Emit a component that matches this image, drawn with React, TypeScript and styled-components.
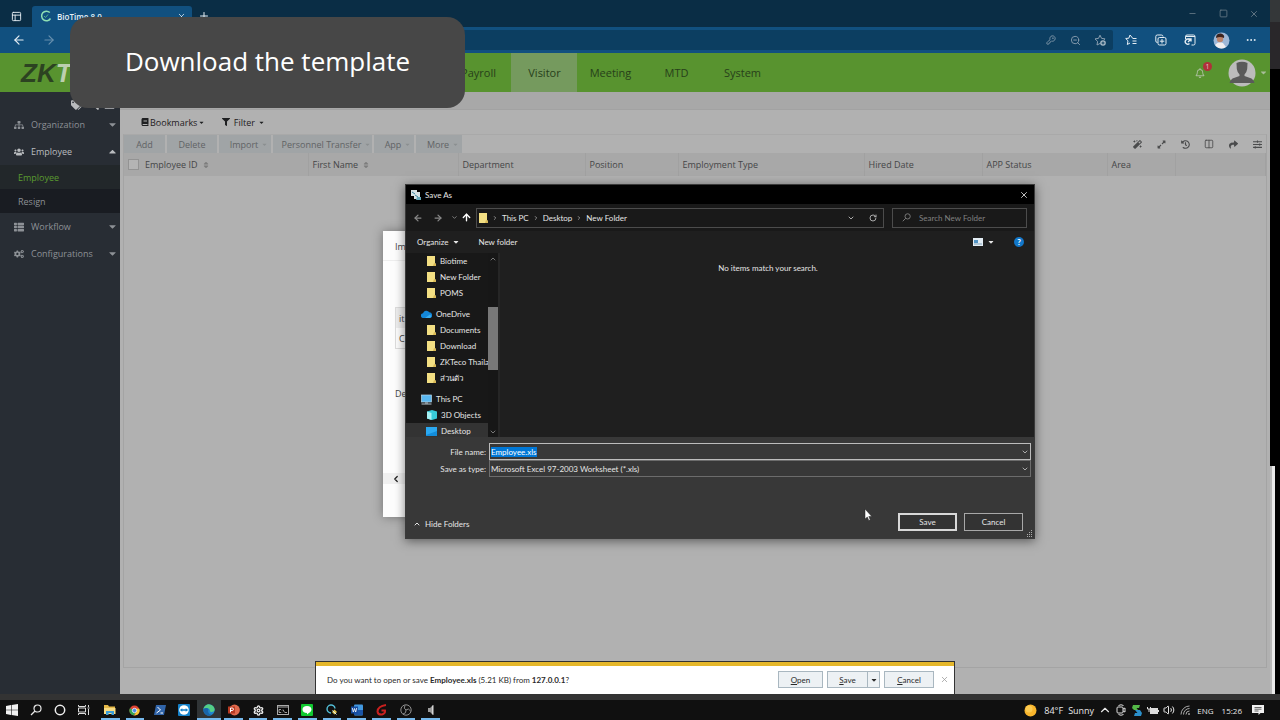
import React, { useEffect, useRef } from "react";
import styled, { createGlobalStyle, css } from "styled-components";
import {
  FaSitemap, FaUsers, FaThList, FaCogs, FaTags, FaBook, FaFilter, FaMagic, FaExpandAlt,
  FaHistory, FaShare, FaSlidersH, FaSort, FaRegBell, FaCaretDown, FaCaretUp, FaSearch, FaBars,
} from "react-icons/fa";
import {
  ArrowLeft, ArrowRight, ArrowUp, ChevronDown, ChevronUp, ChevronRight, ChevronLeft, KeyRound, ZoomOut,
  Settings, X, Plus, Minus, Square, RotateCw, Volume2, PanelsTopLeft, Ellipsis, Columns2,
} from "lucide-react";

const Global = createGlobalStyle`
  * { box-sizing: border-box; }
  body { margin: 0; background: #000; font-family: "Open Sans", "Noto Sans", sans-serif; }
  button, input, select { font: inherit; color: inherit; margin: 0; padding: 0; border: 0; background: none; border-radius: 0; }
  a { color: inherit; text-decoration: none; }
  ul { list-style: none; margin: 0; padding: 0; }
  svg { display: block; flex: none; }
`;

const Screen = styled.div`
  position: relative;
  min-height: 100vh;
  display: flex;
  flex-direction: column;
  background: #333333;
  overflow: hidden;
`;
const Desktop = styled.div`
  flex: 1;
  display: grid;
  grid-template-columns: minmax(0, 1fr) 10px;
  padding-bottom: 6px;
`;
const Browser = styled.main`
  display: flex;
  flex-direction: column;
  background: #b1b1b1;
`;
const Edge = styled.div`
  display: flex;
  flex-direction: column;
  background: #000;
`;
const EdgeTop = styled.div`
  height: 69px;
  background: linear-gradient(#343739 0 22px, #29272a 22px 100%);
`;
const EdgeLight = styled.div`
  margin-top: auto;
  height: 228px;
  width: 5px;
  background: linear-gradient(90deg, #b8b8b8 0 2px, #e9e9e9 2px 100%);
`;

/* Browser chrome */
const TabStrip = styled.div`
  height: 27px;
  display: flex;
  align-items: flex-end;
  background: #0a2d45;
  color: #e8f0f5;
`;
const StripButton = styled.button`
  width: ${(p: { $w?: number }) => p.$w || 32}px;
  height: 22px;
  display: grid;
  place-items: center;
`;
const BrowserTab = styled.div`
  width: 160px;
  height: 21px;
  padding: 0 6px 1px 8px;
  display: flex;
  align-items: center;
  gap: 5px;
  border-radius: 3px 3px 0 0;
  background: #11507f;
  font-size: 8px;
  font-weight: 600;
  button { margin-left: auto; }
`;
const WindowControls = styled.div`
  margin-left: auto;
  display: flex;
  height: 27px;
  align-items: center;
  color: #70818d;
`;
const AddressBar = styled.div`
  height: 26px;
  padding: 0 3px 0 4px;
  display: flex;
  align-items: center;
  background: #11507f;
  color: #e6eef4;
`;
const AddressField = styled.div`
  flex: 1;
  height: 20px;
  margin-left: 36px;
  display: flex;
  align-items: center;
  justify-content: flex-end;
  border-radius: 2px;
  background: #0c3e61;
  color: #8b9fb0;
`;
const BarButton = styled.button`
  width: ${(p: { $w?: number }) => p.$w || 30}px;
  height: 20px;
  display: grid;
  place-items: center;
  opacity: ${(p: { $w?: number; $dim?: boolean }) => (p.$dim ? 0.4 : 1)};
`;

/* Application header */
const AppHeader = styled.header`
  height: 39px;
  display: flex;
  align-items: center;
  background: #58932f;
  color: #27401a;
`;
const Logo = styled.div`
  width: 445px;
  padding: 2px 0 0 21px;
  font: italic bold 26px "Liberation Sans", Arial, sans-serif;
  color: #2c4321;
  span { color: #bccfae; }
`;
const MainNav = styled.nav`
  display: flex;
  height: 100%;
`;
const NavItem = styled.a<{ $active?: boolean }>`
  width: 66px;
  display: grid;
  place-items: center;
  padding-left: 1px;
  font-size: 11px;
  background: ${(p) => (p.$active ? "#759a5e" : "transparent")};
`;
const HeaderTools = styled.div`
  margin-left: auto;
  display: flex;
  align-items: center;
  color: #a8bd99;
`;
const Bell = styled.button`
  position: relative;
  width: 24px;
  height: 24px;
  margin-right: 16px;
  display: grid;
  place-items: center;
`;
const Badge = styled.span`
  position: absolute;
  top: 1px;
  right: 0;
  width: 9px;
  height: 9px;
  border-radius: 50%;
  background: #b0303a;
  color: #e5c3c5;
  font-size: 7px;
  line-height: 9px;
  text-align: center;
`;
const UserButton = styled.button`
  display: flex;
  align-items: center;
  gap: 3px;
  padding-right: 2px;
`;

/* Application body */
const AppBody = styled.div`
  flex: 1;
  display: grid;
  grid-template-columns: 120px minmax(0, 1fr);
`;
const Sidebar = styled.aside`
  background: #282d34;
  color: #8d9196;
  font-size: 9px;
`;
const SideTools = styled.div`
  height: 19px;
  padding: 7px 5px 0 71px;
  display: flex;
  justify-content: space-between;
  color: #b9bbbd;
`;
const SideItem = styled.a<{ $open?: boolean }>`
  height: 27px;
  padding: 0 2px 0 14px;
  display: flex;
  align-items: center;
  gap: 7px;
  color: ${(p) => (p.$open ? "#b9bcbf" : "inherit")};
  svg:last-child { margin-left: auto; }
`;
const SubItem = styled.a<{ $active?: boolean }>`
  height: 24px;
  padding-left: 18px;
  display: flex;
  align-items: center;
  color: ${(p) => (p.$active ? "#5b9c30" : "#8d9196")};
  background: ${(p) => (p.$active ? "#22272a" : "#191c22")};
`;
const Content = styled.section`
  display: flex;
  flex-direction: column;
  color: #3d3f41;
  font-size: 9px;
`;
const PageTabs = styled.div`
  height: 18px;
  background: #a8a8a8;
  border-bottom: 1px solid #a2a2a2;
`;
const QuickBar = styled.div`
  height: 24px;
  padding-left: 21px;
  display: flex;
  align-items: center;
  gap: 17px;
  color: #1f2022;
  button { display: flex; align-items: center; gap: 1px; }
`;
const Panel = styled.div`
  flex: 1;
  margin: 0 3px 26px;
  border: 1px solid #a4a4a4;
  border-top-color: #a9a9a9;
`;
const ActionBar = styled.div`
  height: 18px;
  display: flex;
  align-items: stretch;
  gap: 2px;
`;
const Action = styled.button<{ $w: number }>`
  width: ${(p) => p.$w}px;
  display: flex;
  align-items: center;
  justify-content: center;
  gap: 3px;
  background: #a0a4a6;
  color: #606365;
  svg { color: #8b8f91; margin-right: -8px; }
`;
const ToolIcons = styled.div`
  margin-left: auto;
  display: flex;
  color: #4a4b4c;
  button { width: 24px; padding-right: 4px; display: grid; place-items: center end; }
`;
const DataTable = styled.table`
  width: 100%;
  table-layout: fixed;
  border-collapse: collapse;
  th {
    height: 23px;
    padding: 0 0 0 4px;
    text-align: left;
    font-weight: 400;
    white-space: nowrap;
    color: #454647;
    background: #a8a8a8;
    border-right: 1px solid #a1a1a1;
  }
  th:first-child { border-right: 0; }
  input {
    appearance: none;
    display: block;
    width: 11px;
    height: 11px;
    border: 1px solid #939393;
    background: #b4b4b4;
  }
`;
const HeadCell = styled.span`
  display: flex;
  align-items: center;
  gap: 4px;
  svg { color: #7d7d7d; }
`;

/* Import form that lies behind the file dialog */
const ImportModal = styled.div`
  position: absolute;
  left: 383px;
  top: 231px;
  width: 640px;
  height: 286px;
  background: #fdfdfd;
  box-shadow: 0 0 10px rgba(0, 0, 0, 0.35);
  color: #444;
  font-size: 9px;
  display: flex;
  flex-direction: column;
`;
const ModalTitle = styled.div`
  height: 30px;
  padding: 9px 12px;
  border-bottom: 1px solid #eee;
`;
const ModalTable = styled.div`
  margin: 46px 12px 0;
  border: 1px solid #ddd;
  div { height: 20px; padding: 4px 3px; }
  div:first-child { background: #eee; }
`;
const ModalNote = styled.div`
  padding: 38px 12px 0;
`;
const ModalScroll = styled.div`
  margin: auto 0 33px;
  height: 11px;
  padding-left: 8px;
  display: flex;
  align-items: center;
  background: #f0f0f0;
  color: #222;
`;

/* File dialog */
const Dialog = styled.section`
  position: absolute;
  left: 405px;
  top: 184px;
  width: 630px;
  height: 355px;
  display: flex;
  flex-direction: column;
  border: 1px solid #3a3a3a;
  background: #1f1f1f;
  color: #e6e6e6;
  font-family: Lato, "Noto Sans", sans-serif;
  font-size: 8px;
  box-shadow: 0 2px 10px rgba(0, 0, 0, 0.5);
`;
const DialogTitle = styled.div`
  height: 19px;
  padding: 0 5px 0 4px;
  display: flex;
  align-items: center;
  gap: 4px;
  background: #000;
  button { margin-left: auto; }
`;
const PathRow = styled.div`
  height: 27px;
  padding: 0 7px 0 5px;
  display: flex;
  align-items: center;
  background: #191919;
`;
const HistoryButton = styled.button<{ $w: number; $bright?: boolean }>`
  width: ${(p) => p.$w}px;
  display: grid;
  place-items: center;
  color: ${(p) => (p.$bright ? "#fff" : "#888")};
`;
const PathField = styled.div`
  flex: 1;
  height: 20px;
  margin-right: 8px;
  padding: 0 6px 0 1px;
  display: flex;
  align-items: center;
  gap: 4px;
  border: 1px solid #4c4c4c;
  svg { color: #aaa; }
`;
const PathEnd = styled.div`
  margin-left: auto;
  display: flex;
  gap: 14px;
`;
const SearchField = styled.label`
  width: 135px;
  height: 20px;
  padding-left: 9px;
  display: flex;
  align-items: center;
  gap: 8px;
  border: 1px solid #4c4c4c;
  color: #808080;
  input { width: 100px; outline: 0; }
  input::placeholder { color: #808080; opacity: 1; }
`;
const CommandRow = styled.div`
  height: 22px;
  padding: 0 10px 0 11px;
  display: flex;
  align-items: center;
  gap: 18px;
  button { display: flex; align-items: center; gap: 4px; }
`;
const CommandEnd = styled.div`
  margin-left: auto;
  display: flex;
  gap: 19px;
`;
const Help = styled.button`
  width: 10px;
  height: 10px;
  border-radius: 50%;
  background: #1277c9;
  color: #fff;
  font-weight: 700;
  justify-content: center;
`;
const Browse = styled.div`
  height: 184px;
  display: grid;
  grid-template-columns: 82px 10px minmax(0, 1fr);
`;
const Tree = styled.ul`
  overflow: hidden;
  height: 184px;
  background: #181818;
`;
const TreeRow = styled.li<{ $root?: boolean; $selected?: boolean }>`
  height: 16px;
  margin-top: ${(p) => (p.$root ? 5 : 0)}px;
  padding-left: ${(p) => (p.$root ? 15 : 20)}px;
  display: flex;
  align-items: center;
  gap: 4px;
  white-space: nowrap;
  background: ${(p) => (p.$selected ? "#333" : "transparent")};
`;
const TreeScroll = styled.div`
  display: flex;
  flex-direction: column;
  justify-content: space-between;
  align-items: center;
  padding: 2px 0 1px;
  background: #171717;
  color: #aaa;
`;
const TreeThumb = styled.div`
  width: 10px;
  height: 63px;
  margin-top: -14px;
  background: #787878;
`;
const Empty = styled.div`
  padding: 10px 0 0 2px;
  text-align: center;
  border-left: 2px solid #262626;
`;
const DialogFoot = styled.form`
  flex: 1;
  padding: 6px 3px 0 0;
  display: flex;
  flex-direction: column;
  background: #383838;
`;
const FormRow = styled.div<{ $strong?: boolean }>`
  display: grid;
  grid-template-columns: 80px minmax(0, 1fr);
  gap: 3px;
  align-items: center;
  label { text-align: right; }
  > div {
    height: 17px;
    padding: 0 1px;
    display: flex;
    align-items: center;
    border: 1px solid ${(p) => (p.$strong ? "#bcbcbc" : "#6c6c6c")};
  }
  input, select { flex: 1; min-width: 0; appearance: none; outline: 0; }
  input::selection { background: #0078d7; color: #fff; }
`;
const FootRow = styled.div`
  margin-top: 36px;
  padding: 0 8px 0 7px;
  display: flex;
  gap: 7px;
`;
const HideFolders = styled.button`
  margin-right: auto;
  padding-top: 4px;
  display: flex;
  align-items: center;
  gap: 4px;
`;
const DialogButton = styled.button<{ $default?: boolean }>`
  width: 59px;
  height: 18px;
  background: #333;
  border: ${(p) => (p.$default ? "2px solid #d8d8d8" : "1px solid #a8a8a8")};
`;
const Grip = styled.svg`
  position: absolute;
  right: 1px;
  bottom: 1px;
`;
const Pointer = styled.svg`
  position: absolute;
  left: 864px;
  top: 508px;
`;

/* Download prompt */
const Prompt = styled.section`
  position: absolute;
  left: 315px;
  right: 325px;
  bottom: 26px;
  height: 33px;
  padding: 3px 4px 0 11px;
  display: flex;
  align-items: center;
  border: 1px solid #333;
  border-bottom: 0;
  background: linear-gradient(#e5b72b 0 4px, #fff 4px 100%);
  color: #2a2a2a;
  font-family: Lato, "Noto Sans", sans-serif;
  font-size: 8px;
  p { margin: 0 auto 0 0; }
`;
const PromptButton = styled.button<{ $w: number }>`
  width: ${(p) => p.$w}px;
  height: 17px;
  display: flex;
  align-items: center;
  justify-content: center;
  border: 1px solid #a9b7c0;
  background: #edf1f4;
  u { text-underline-offset: 1px; }
`;
const PromptActions = styled.div`
  display: flex;
  button + button { margin-left: 4px; }
  button:nth-child(3) { margin-left: -1px; }
`;
const PromptClose = styled.button`
  width: 10px;
  margin-left: 6px;
  color: #999;
`;

/* Taskbar */
const Taskbar = styled.footer`
  height: 20px;
  display: flex;
  background: #101010;
  color: #e8e8e8;
`;
const SystemButtons = styled.div`
  width: 98px;
  padding-right: 2px;
  display: grid;
  grid-template-columns: repeat(4, 1fr);
  button { display: grid; place-items: center; }
`;
const Apps = styled.div`
  width: 345px;
  display: grid;
  grid-template-columns: repeat(14, 1fr);
`;
const running = css`
  box-shadow: inset 0 -2px #76b9ed;
`;
const AppButton = styled.button<{ $running?: boolean; $active?: boolean }>`
  margin: 0 3px;
  display: grid;
  place-items: center;
  ${(p) => p.$running && running}
  ${(p) => p.$active && css`margin: 0; background: #303436;`}
`;
const Tray = styled.div`
  margin-left: auto;
  padding-right: 16px;
  display: flex;
  align-items: center;
  font-size: 8px;
`;
const Weather = styled.div`
  font-size: 9px;
  margin: 0 3px 0 7px;
  span { margin-left: 5px; }
`;
const TrayIcon = styled.span`
  width: 16px;
  display: grid;
  place-items: center;
`;
const Clock = styled.span`
  margin: 0 10px 0 8px;
`;

const Caption = styled.div`
  position: absolute;
  left: 70px;
  top: 17px;
  width: 395px;
  height: 91px;
  padding-bottom: 3px;
  display: grid;
  place-items: center;
  border-radius: 18px;
  background: #474747;
  color: #fff;
  h1 { margin: 0; font-size: 26px; font-weight: 400; white-space: nowrap; }
`;

const Folder = () => (
  <svg width="10" height="12" viewBox="0 0 10 12">
    <path d="M1 1h8v7l1 1v2H1z" fill="#f3df83" />
    <path d="M8 8l2 1v2H7z" fill="#d9b956" />
  </svg>
);
const Cloud = () => (
  <svg width="11" height="8" viewBox="0 0 11 8">
    <path d="M2.500 8A2.400 2.400 0 0 1 2 3.200 3.500 3.500 0 0 1 8.300 2.300 2.900 2.900 0 0 1 9 8z" fill="#1487d8" />
    <path d="M4 8l5-3.500a2 2 0 0 1 0 3.500z" fill="#39aef0" />
  </svg>
);
const Computer = () => (
  <svg width="11" height="11" viewBox="0 0 11 11">
    <rect x="0.500" y="1" width="10" height="7" fill="#59b7f0" stroke="#b8d8ea" strokeWidth="0.700" />
    <path d="M0.500 10h10M4 9h3" stroke="#b9c7d0" />
  </svg>
);
const Cube = () => (
  <svg width="11" height="12" viewBox="0 0 11 12">
    <path d="M1 2.500l5-1.500 5 1.500v7L6 11 1 9.500z" fill="#38cbd8" />
    <path d="M1 2.500l4.500 1.500v7L1 9.500z" fill="#a5f1f4" />
  </svg>
);
const Screenlet = () => (
  <svg width="11" height="9" viewBox="0 0 11 9">
    <rect width="11" height="9" fill="#138ddb" />
    <path d="M0 0h11v4L0 8z" fill="#2ba9f2" />
  </svg>
);
const Avatar = () => (
  <svg width="28" height="28" viewBox="0 0 28 28">
    <circle cx="14" cy="14" r="13.500" fill="#bcbcbc" />
    <path d="M8.500 4q5.500-2.500 11 0l-.3 6q-.7 4-2.700 5.500V17l7 2.500q2.500 1.500 3 4.500H1.500q.5-3 3-4.500l7-2.500v-1.500Q9.500 14 8.800 10z" fill="#5a5a5a" />
  </svg>
);
const Profile = () => (
  <svg width="17" height="17" viewBox="0 0 17 17">
    <circle cx="8.500" cy="8.500" r="8" fill="#9eb8d8" />
    <path d="M2 13q3-4 8-2l3 4q-6 4-11-2z" fill="#f1eef0" />
    <circle cx="7" cy="7" r="3.200" fill="#bb846c" />
    <path d="M3 6q0-5 5-4.500 4 1 3 4.500-4-2-8 0z" fill="#3b2420" />
  </svg>
);
const Spinner = () => (
  <svg width="12" height="12" viewBox="0 0 12 12" fill="none">
    <path d="M9.800 2.500A4.800 4.800 0 1 0 10.500 8.500" stroke="#8fe0b4" strokeWidth="1.500" />
    <path d="M4 6l1.500 1.500L8 4.500" stroke="#51b68a" />
  </svg>
);
const StarPlus = () => (
  <svg width="12" height="12" viewBox="0 0 12 12" fill="none">
    <path d="M6.500 9.200L3 11l.6-3.600L1 4.900l3.500-.5L6 1.200l1.600 3.200 3.400.5-1 1" stroke="currentColor" />
    <circle cx="9" cy="9" r="2.800" fill="#a9bac6" />
    <path d="M9 7.500v3M7.500 9h3" stroke="#0c3e61" />
  </svg>
);
const FavList = () => (
  <svg width="12" height="12" viewBox="0 0 12 12" fill="none" stroke="currentColor" strokeWidth="1">
    <path d="M7.500 4L5 1 3.800 4.200.7 4.500 3 6.800 2.300 10.500 5 9M7.500 4.500h4M7.500 7h4M7.500 9.500h4" />
  </svg>
);
const Collections = () => (
  <svg width="12" height="12" viewBox="0 0 12 12" fill="none" stroke="currentColor">
    <path d="M2.500 8.500Q.8 8.500.8 7V2.500Q.8 1 2.300 1h4Q8 1 8 2.500" />
    <rect x="3" y="3.500" width="8" height="7.500" rx="1.500" />
    <path d="M7 5v4.500M4.800 7.200h4.500" />
  </svg>
);
const Essentials = () => (
  <svg width="12" height="12" viewBox="0 0 12 12" fill="none" stroke="currentColor">
    <path d="M1.500 5V2.500Q1.500 1 3 1h6.500Q11 1 11 2.500v7q0 1.500-1.500 1.500H7.500M1.500 2.500h9.500" />
    <path d="M5 5.500A2.500 2.500 0 1 0 5.500 9.500M4 8l3-3M4.500 5H7v2.500" strokeWidth="1.400" />
  </svg>
);
const WinLogo = () => (
  <svg width="12" height="12" viewBox="0 0 12 12" fill="#f2f2f2">
    <path d="M0 2l5-1v4.700H0zM5.600.9L12 0v5.700H5.600zM0 6.300h5V11l-5-1zM5.600 6.300H12V12l-6.400-.9z" />
  </svg>
);
const TaskView = () => (
  <svg width="12" height="12" viewBox="0 0 12 12" fill="none" stroke="#ddd">
    <path d="M.5 1v1.500h7V1M.5 11V9.500h7V11M.5 4h7v4h-7zM10.500 1v2M10.500 5v6M9.500 4h2" />
  </svg>
);
const Explorer = () => (
  <svg width="12" height="12" viewBox="0 0 12 12">
    <path d="M0 1h4l1 1.500h6V10H0z" fill="#e6b948" />
    <path d="M0 4h11.500v6H0z" fill="#f8dc83" />
    <path d="M2 11V7h8v4H7.500V9h-3v2z" fill="#3b9dd8" />
  </svg>
);
const Chrome = () => (
  <svg width="11" height="11" viewBox="0 0 12 12">
    <circle cx="6" cy="6" r="5.500" fill="#e14434" />
    <path d="M1 3.500A5.500 5.500 0 0 0 5.500 11.500L8 7z" fill="#37a653" />
    <path d="M11.200 4H6l2 3.500-2.300 4A5.500 5.500 0 0 0 11.200 4z" fill="#f6c834" />
    <circle cx="6" cy="6" r="2.400" fill="#4a88e8" stroke="#fff" strokeWidth="0.800" />
  </svg>
);
const PowerShell = () => (
  <svg width="12" height="10" viewBox="0 0 12 10">
    <path d="M2 0h10l-2 10H0z" fill="#3165aa" />
    <path d="M3.500 2l3 3-4 3M6.500 8H9" stroke="#fff" fill="none" />
  </svg>
);
const TeamViewer = () => (
  <svg width="12" height="12" viewBox="0 0 12 12">
    <rect width="12" height="12" rx="1" fill="#1380c8" />
    <circle cx="6" cy="6" r="4.800" fill="#fff" />
    <path d="M1.800 6l2.500-1.700v1h3.400v-1L10.200 6 7.700 7.700v-1H4.300v1z" fill="#1380c8" />
  </svg>
);
const EdgeLogo = () => (
  <svg width="12" height="12" viewBox="0 0 12 12">
    <circle cx="6" cy="6" r="5.700" fill="#2086cd" />
    <path d="M.4 5A5.700 5.700 0 0 1 11.700 6Q11 8.300 8 8q-1.500-.3-1-2Q5 2.500.4 5z" fill="#54cf87" />
    <path d="M.4 5Q4 3 5.500 5.500 4 9 8.500 11A5.700 5.700 0 0 1 .4 5z" fill="#1965aa" />
  </svg>
);
const PowerPoint = () => (
  <svg width="12" height="12" viewBox="0 0 12 12">
    <circle cx="6.500" cy="6" r="5.400" fill="#e0694c" />
    <rect y="2.500" width="7" height="7" fill="#b83a22" />
    <path d="M2.500 8.300V4h1.700a1.200 1.200 0 0 1 0 2.500H2.500" fill="none" stroke="#fff" />
  </svg>
);
const Terminal = () => (
  <svg width="12" height="10" viewBox="0 0 12 10">
    <rect x="0.500" y="0.500" width="11" height="9" fill="#080808" stroke="#aaa" />
    <path d="M1 2h10" stroke="#aaa" />
    <path d="M4 4.500H2v3h2M5 5v.5M5 7v.5M6 4.500l1.500 3M8 7.500h2" stroke="#ddd" strokeWidth="0.700" fill="none" />
  </svg>
);
const Line = () => (
  <svg width="12" height="12" viewBox="0 0 12 12">
    <rect width="12" height="12" rx="1" fill="#10c930" />
    <path d="M6 2c3 0 4.500 1.600 4.500 3.500C10.500 7.500 8 9 6 10.500V9C3 9 1.500 7.500 1.500 5.500S3 2 6 2z" fill="#fff" />
  </svg>
);
const Snip = () => (
  <svg width="12" height="12" viewBox="0 0 12 12" fill="none">
    <path d="M5 9A4 4 0 1 1 9 4.500" stroke="#53bfd8" strokeWidth="1.400" />
    <path d="M8.500 5.500l2.500 2.500-2.500 2.500L6 8z" fill="#e3c34d" />
    <path d="M6.500 6.500l4 4" stroke="#d8eef4" />
  </svg>
);
const Word = () => (
  <svg width="12" height="12" viewBox="0 0 12 12">
    <rect x="3" y="0.500" width="9" height="11" rx="1" fill="#4298df" />
    <path d="M3 6h9v5H3z" fill="#1b55a8" />
    <rect y="2.500" width="7" height="7" fill="#174da0" />
    <path d="M1.300 4l1 4 1.200-3.500L4.700 8l1-4" fill="none" stroke="#fff" strokeWidth="0.800" />
  </svg>
);
const RedG = () => (
  <svg width="11" height="12" viewBox="0 0 11 12" fill="none">
    <path d="M10 1Q2 2 1.500 7.500 2 11 6 10.500q3.500-1 3-4H5.500" stroke="#c9201f" strokeWidth="2" />
  </svg>
);
const Obs = () => (
  <svg width="12" height="12" viewBox="0 0 12 12" fill="none" stroke="#8e8e8e">
    <circle cx="6" cy="6" r="5.200" />
    <path d="M5 1.500Q3 4.500 6 6M10.500 7Q8.500 3.500 6 6M3 10Q6.500 9.500 6 6" />
  </svg>
);
const Speaker = () => (
  <svg width="8" height="12" viewBox="0 0 8 12">
    <path d="M1 4h2l3-3v10L3 8H1z" fill="#9b9b9b" />
    <path d="M5 2l1.500-1v10L5 10z" fill="#d5d5d5" />
  </svg>
);
const MeetNow = () => (
  <svg width="10" height="12" viewBox="0 0 10 12" fill="none" stroke="#ddd">
    <path d="M2.500 1.500q2.500-1.500 5 0M2.500 10.500q2.500 1.500 5 0" />
    <rect x="1" y="3" width="6" height="6" rx="1" />
    <path d="M7 5l2-1v4L7 7" />
  </svg>
);
const SGreen = () => (
  <svg width="10" height="11" viewBox="0 0 10 11">
    <path d="M1 0h7l-1 3H4.500l1.500 2H2L0 3z" fill="#54b947" />
    <path d="M3 5h5l2 3-1 3H2l1-3h2.500z" fill="#2b8fca" />
  </svg>
);
const Battery = () => (
  <svg width="12" height="9" viewBox="0 0 12 9" fill="none" stroke="#ddd">
    <rect x="3.500" y="2.500" width="7" height="5" fill="#ddd" />
    <path d="M11.500 4v2M.5 1v2h3V1M2 3v3" />
  </svg>
);
const Wifi = () => (
  <svg width="10" height="10" viewBox="0 0 10 10" fill="none" stroke="#aaa">
    <path d="M1 9.500A8.500 8.500 0 0 1 9.500 1M3.500 9.500a6 6 0 0 1 6-6M6 9.500A3.500 3.500 0 0 1 9.500 6" />
    <circle cx="9" cy="9" r="0.500" fill="#ddd" />
  </svg>
);
const Notice = () => (
  <svg width="12" height="12" viewBox="0 0 12 12">
    <path d="M0 1h12v8H8.500L6.500 11V9H0z" fill="#f0f0f0" />
    <path d="M2.500 3.500h7M2.500 5.200h7M2.500 7h4" stroke="#444" strokeWidth="0.800" />
  </svg>
);
const Magnifier = ({ size }: { size: number }) => (
  <svg width={size} height={size} viewBox="0 0 12 12" fill="none" stroke="currentColor" strokeWidth="1.200">
    <circle cx="7.500" cy="4.500" r="3.500" />
    <path d="M5 7L1 11" />
  </svg>
);

const navItems = ["Payroll", "Visitor", "Meeting", "MTD", "System"];
const columns: [string, number, boolean?][] = [
  ["Employee ID", 167, true], ["First Name", 150, true], ["Department", 127], ["Position", 93],
  ["Employment Type", 186], ["Hired Date", 118], ["APP Status", 125], ["Area", 68],
];
const tools: [string, React.ReactNode][] = [
  ["Clean", <FaMagic size={9} />], ["Expand", <FaExpandAlt size={9} />], ["History", <FaHistory size={9} />],
  ["Columns", <Columns2 size={10} />], ["Share", <FaShare size={9} />], ["Preferences", <FaSlidersH size={9} />],
];
const tree: { name: string; icon: React.ReactNode; root?: boolean; selected?: boolean }[] = [
  { name: "Biotime", icon: <Folder /> },
  { name: "New Folder", icon: <Folder /> },
  { name: "POMS", icon: <Folder /> },
  { name: "OneDrive", icon: <Cloud />, root: true },
  { name: "Documents", icon: <Folder /> },
  { name: "Download", icon: <Folder /> },
  { name: "ZKTeco Thaila", icon: <Folder /> },
  { name: "ส่วนตัว", icon: <Folder /> },
  { name: "This PC", icon: <Computer />, root: true },
  { name: "3D Objects", icon: <Cube /> },
  { name: "Desktop", icon: <Screenlet />, selected: true },
];
const apps: { name: string; icon: React.ReactNode; idle?: boolean; active?: boolean }[] = [
  { name: "File Explorer", icon: <Explorer /> },
  { name: "Chrome", icon: <Chrome /> },
  { name: "PowerShell", icon: <PowerShell />, idle: true },
  { name: "TeamViewer", icon: <TeamViewer />, idle: true },
  { name: "Edge", icon: <EdgeLogo />, active: true },
  { name: "PowerPoint", icon: <PowerPoint /> },
  { name: "Settings", icon: <Settings size={11} strokeWidth={3} /> },
  { name: "Command Prompt", icon: <Terminal /> },
  { name: "Line", icon: <Line /> },
  { name: "Snip", icon: <Snip /> },
  { name: "Word", icon: <Word /> },
  { name: "Gear", icon: <RedG /> },
  { name: "OBS", icon: <Obs /> },
  { name: "Sound", icon: <Speaker /> },
];

export default function App() {
  const fileName = useRef<HTMLInputElement>(null);
  useEffect(() => {
    fileName.current?.focus();
    fileName.current?.select();
  }, []);

  return (
    <Screen>
      <Global />
      <Desktop>
        <Browser>
          <TabStrip>
            <StripButton aria-label="Tab actions"><PanelsTopLeft size={11} /></StripButton>
            <BrowserTab>
              <Spinner />
              BioTime 8.0
              <button aria-label="Close tab"><X size={9} /></button>
            </BrowserTab>
            <StripButton $w={23} aria-label="New tab"><Plus size={12} /></StripButton>
            <WindowControls>
              <StripButton aria-label="Minimize"><Minus size={9} /></StripButton>
              <StripButton $w={30} aria-label="Maximize"><Square size={9} /></StripButton>
              <StripButton aria-label="Close window"><X size={10} /></StripButton>
            </WindowControls>
          </TabStrip>
          <AddressBar>
            <BarButton aria-label="Back"><ArrowLeft size={14} /></BarButton>
            <BarButton $dim aria-label="Forward"><ArrowRight size={14} /></BarButton>
            <AddressField>
              <BarButton $w={24} aria-label="Passwords"><KeyRound size={10} /></BarButton>
              <BarButton $w={24} aria-label="Zoom"><ZoomOut size={11} /></BarButton>
              <BarButton $w={26} aria-label="Add favorite"><StarPlus /></BarButton>
            </AddressField>
            <BarButton $w={36} aria-label="Favorites"><FavList /></BarButton>
            <BarButton $w={24} aria-label="Collections"><Collections /></BarButton>
            <BarButton $w={34} aria-label="Essentials"><Essentials /></BarButton>
            <BarButton $w={28} aria-label="Profile"><Profile /></BarButton>
            <BarButton $w={32} aria-label="More"><Ellipsis size={12} /></BarButton>
          </AddressBar>
          <AppHeader>
            <Logo>ZK<span>Teco</span></Logo>
            <MainNav>
              {navItems.map((n) => <NavItem key={n} href="#" $active={n === "Visitor"}>{n}</NavItem>)}
            </MainNav>
            <HeaderTools>
              <Bell aria-label="Notifications"><FaRegBell size={10} /><Badge>1</Badge></Bell>
              <UserButton aria-label="Account"><Avatar /><FaCaretDown size={9} /></UserButton>
            </HeaderTools>
          </AppHeader>
          <AppBody>
            <Sidebar>
              <SideTools><FaTags size={12} /><FaSearch size={11} /><FaBars size={11} /></SideTools>
              <SideItem href="#"><FaSitemap size={10} />Organization<FaCaretDown size={11} /></SideItem>
              <SideItem href="#" $open><FaUsers size={10} />Employee<FaCaretUp size={11} /></SideItem>
              <SubItem href="#" $active>Employee</SubItem>
              <SubItem href="#">Resign</SubItem>
              <SideItem href="#"><FaThList size={10} />Workflow<FaCaretDown size={11} /></SideItem>
              <SideItem href="#"><FaCogs size={10} />Configurations<FaCaretDown size={11} /></SideItem>
            </Sidebar>
            <Content>
              <PageTabs />
              <QuickBar>
                <button><FaBook size={8} />Bookmarks<FaCaretDown size={7} /></button>
                <button><FaFilter size={8} />&nbsp;Filter&nbsp;<FaCaretDown size={7} /></button>
              </QuickBar>
              <Panel>
                <ActionBar>
                  <Action $w={41}>Add</Action>
                  <Action $w={50}>Delete</Action>
                  <Action $w={52}>Import<FaCaretDown size={7} /></Action>
                  <Action $w={99}>Personnel Transfer<FaCaretDown size={7} /></Action>
                  <Action $w={40}>App<FaCaretDown size={7} /></Action>
                  <Action $w={46}>More<FaCaretDown size={7} /></Action>
                  <ToolIcons>
                    {tools.map(([name, icon]) => <button key={name} aria-label={name}>{icon}</button>)}
                  </ToolIcons>
                </ActionBar>
                <DataTable>
                  <colgroup>
                    <col width={17} />
                    {columns.map(([name, w]) => <col key={name} width={w} />)}
                    <col />
                  </colgroup>
                  <thead>
                    <tr>
                      <th><input type="checkbox" aria-label="Select all" /></th>
                      {columns.map(([name, , sort]) => (
                        <th key={name}><HeadCell>{name}{sort && <FaSort size={8} />}</HeadCell></th>
                      ))}
                      <th />
                    </tr>
                  </thead>
                </DataTable>
              </Panel>
            </Content>
          </AppBody>
        </Browser>
        <Edge><EdgeTop /><EdgeLight /></Edge>
      </Desktop>

      <Taskbar>
        <SystemButtons>
          <button aria-label="Start"><WinLogo /></button>
          <button aria-label="Search"><Magnifier size={12} /></button>
          <button aria-label="Cortana">
            <svg width="12" height="12" viewBox="0 0 12 12"><circle cx="6" cy="6" r="4.700" fill="none" stroke="#eee" strokeWidth="1.500" /></svg>
          </button>
          <button aria-label="Task view"><TaskView /></button>
        </SystemButtons>
        <Apps>
          {apps.map((a) => (
            <AppButton key={a.name} aria-label={a.name} $running={!a.idle} $active={a.active}>{a.icon}</AppButton>
          ))}
        </Apps>
        <Tray>
          <svg width="13" height="13" viewBox="0 0 13 13"><circle cx="6.500" cy="6.500" r="6" fill="#f8b52c" /><circle cx="5" cy="5" r="3.500" fill="#fcca50" /></svg>
          <Weather>84°F<span>Sunny</span></Weather>
          <TrayIcon><ChevronUp size={14} /></TrayIcon>
          <TrayIcon><MeetNow /></TrayIcon>
          <TrayIcon><SGreen /></TrayIcon>
          <TrayIcon><Battery /></TrayIcon>
          <TrayIcon><Volume2 size={12} /></TrayIcon>
          <TrayIcon><Wifi /></TrayIcon>
          &nbsp;&nbsp;ENG
          <Clock>15:26</Clock>
          <Notice />
        </Tray>
      </Taskbar>

      <Prompt>
        <p>Do you want to open or save <b>Employee.xls</b> (5.21 KB) from <b>127.0.0.1</b>?</p>
        <PromptActions>
          <PromptButton $w={45}><u>O</u>pen</PromptButton>
          <PromptButton $w={41}><u>S</u>ave</PromptButton>
          <PromptButton $w={13} aria-label="Save options"><FaCaretDown size={8} /></PromptButton>
          <PromptButton $w={50}><u>C</u>ancel</PromptButton>
        </PromptActions>
        <PromptClose aria-label="Dismiss"><X size={9} /></PromptClose>
      </Prompt>

      <ImportModal>
        <ModalTitle>Im</ModalTitle>
        <ModalTable><div>it</div><div>C</div></ModalTable>
        <ModalNote>De</ModalNote>
        <ModalScroll><ChevronLeft size={10} strokeWidth={3} /></ModalScroll>
      </ImportModal>

      <Dialog>
        <DialogTitle>
          <svg width="11" height="11" viewBox="0 0 11 11">
            <path d="M1 1h6v6H1zM4 3h6v7H4z" fill="#d6e3e6" />
            <path d="M2 3l3 2M5 6l3 2" stroke="#3c8aa3" /><path d="M7 8h4v3H6z" fill="#65a7b9" />
          </svg>
          Save As
          <button aria-label="Close dialog"><X size={10} /></button>
        </DialogTitle>
        <PathRow>
          <HistoryButton $w={14} aria-label="Back"><ArrowLeft size={10} strokeWidth={3} /></HistoryButton>
          <HistoryButton $w={26} aria-label="Forward"><ArrowRight size={10} strokeWidth={3} /></HistoryButton>
          <HistoryButton $w={5} aria-label="Recent"><ChevronDown size={7} strokeWidth={3} /></HistoryButton>
          <HistoryButton $w={20} $bright aria-label="Up"><ArrowUp size={11} strokeWidth={3} /></HistoryButton>
          <PathField>
            <Folder /><ChevronRight size={6} strokeWidth={3} />
            This PC<ChevronRight size={6} strokeWidth={3} />
            Desktop<ChevronRight size={6} strokeWidth={3} />
            New Folder
            <PathEnd><ChevronDown size={8} strokeWidth={3} /><RotateCw size={8} strokeWidth={3} /></PathEnd>
          </PathField>
          <SearchField>
            <Magnifier size={9} />
            <input aria-label="Search New Folder" placeholder="Search New Folder" />
          </SearchField>
        </PathRow>
        <CommandRow>
          <button type="button">Organize<FaCaretDown size={8} /></button>
          <button type="button">New folder</button>
          <CommandEnd>
            <button type="button" aria-label="View">
              <svg width="10" height="8" viewBox="0 0 10 8"><rect width="10" height="8" fill="#e3edf4" /><path d="M1 2h4v3H1z" fill="#5293c3" /><path d="M1 6h8" stroke="#80a0b5" /></svg>
              <FaCaretDown size={8} />
            </button>
            <Help type="button">?</Help>
          </CommandEnd>
        </CommandRow>
        <Browse>
          <Tree>
            {tree.map((t) => <TreeRow key={t.name} $root={t.root} $selected={t.selected}>{t.icon}{t.name}</TreeRow>)}
          </Tree>
          <TreeScroll><ChevronUp size={8} /><TreeThumb /><ChevronDown size={8} /></TreeScroll>
          <Empty>No items match your search.</Empty>
        </Browse>
        <DialogFoot onSubmit={(e) => e.preventDefault()}>
          <FormRow $strong>
            <label htmlFor="file-name">File name:</label>
            <div><input id="file-name" ref={fileName} defaultValue="Employee.xls" /><ChevronDown size={8} /></div>
          </FormRow>
          <FormRow>
            <label htmlFor="file-type">Save as type:</label>
            <div>
              <select id="file-type"><option>Microsoft Excel 97-2003 Worksheet (*.xls)</option></select>
              <ChevronDown size={8} />
            </div>
          </FormRow>
          <FootRow>
            <HideFolders type="button"><ChevronUp size={8} strokeWidth={3} />Hide Folders</HideFolders>
            <DialogButton $default>Save</DialogButton>
            <DialogButton type="button">Cancel</DialogButton>
          </FootRow>
        </DialogFoot>
        <Grip width="7" height="7" viewBox="0 0 7 7" fill="#aaa">
          <path d="M5 0h1v1H5zM3 2h1v1H3zM5 2h1v1H5zM1 4h1v1H1zM3 4h1v1H3zM5 4h1v1H5zM1 6h1v1H1zM3 6h1v1H3zM5 6h1v1H5z" />
        </Grip>
      </Dialog>

      <Pointer width="9" height="14" viewBox="0 0 9 14">
        <path d="M1 1v10l2.300-2 1.500 3.500 1.500-.7-1.500-3.300h3z" fill="#fff" stroke="#222" strokeWidth="0.500" />
      </Pointer>

      <Caption><h1>Download the template</h1></Caption>
    </Screen>
  );
}
